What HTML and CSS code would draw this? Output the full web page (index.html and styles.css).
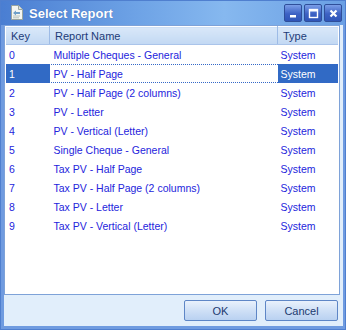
FILE: index.html
```html
<!DOCTYPE html>
<html>
<head>
    <title>Select Report</title>
    <link rel="stylesheet" href="styles.css">
</head>
<body>

    <div class="window">
        <div class="titlebar">
            <svg class="title-icon" width="13" height="15" viewBox="0 0 13 15">
                <path d="M1.5 0.5 H8.5 L12.5 4.5 V14.5 H1.5 Z" fill="#f4f6f2" stroke="#9aa6a0"/>
                <path d="M8.5 0.5 V4.5 H12.5" fill="#dfe4dc" stroke="#9aa6a0"/>
                <path d="M3 8 L6 5.5 L6 7 L10 7 L10 9 L6 9 L6 10.5 Z" fill="#6fa0c8"/>
                <path d="M3 11 H10 M3 12.8 H9" stroke="#b6c2bc"/>
            </svg>
            <span class="title-text">Select Report</span>
            <div class="title-buttons">
                <span class="tbtn"><svg width="15" height="15" viewBox="0 0 15 15"><rect x="4" y="9" width="6" height="2.5" fill="#fff"/></svg></span>
                <span class="tbtn"><svg width="15" height="15" viewBox="0 0 15 15"><rect x="3.5" y="3.5" width="8" height="8" fill="none" stroke="#fff" stroke-width="1.4"/><rect x="3" y="3" width="9" height="2.5" fill="#fff"/></svg></span>
                <span class="tbtn"><svg width="15" height="15" viewBox="0 0 15 15"><path d="M4.5 4.5 L10.5 10.5 M10.5 4.5 L4.5 10.5" stroke="#fff" stroke-width="2.2"/></svg></span>
            </div>
        </div>

        <div class="client">
            <div class="list">
                <table class="report-table">
                    <thead>
                        <tr>
                            <th class="col-key">Key</th>
                            <th class="col-name">Report Name</th>
                            <th class="col-type">Type</th>
                        </tr>
                    </thead>
                    <tbody>
                        <tr><td>0</td><td>Multiple Cheques - General</td><td>System</td></tr>
                        <tr class="selected"><td class="hl">1</td><td class="plain">PV - Half Page</td><td class="hl">System</td></tr>
                        <tr><td>2</td><td>PV - Half Page (2 columns)</td><td>System</td></tr>
                        <tr><td>3</td><td>PV - Letter</td><td>System</td></tr>
                        <tr><td>4</td><td>PV - Vertical (Letter)</td><td>System</td></tr>
                        <tr><td>5</td><td>Single Cheque - General</td><td>System</td></tr>
                        <tr><td>6</td><td>Tax PV - Half Page</td><td>System</td></tr>
                        <tr><td>7</td><td>Tax PV - Half Page (2 columns)</td><td>System</td></tr>
                        <tr><td>8</td><td>Tax PV - Letter</td><td>System</td></tr>
                        <tr><td>9</td><td>Tax PV - Vertical (Letter)</td><td>System</td></tr>
                    </tbody>
                </table>
            </div>

            <div class="button-row">
                <button class="btn">OK</button>
                <button class="btn">Cancel</button>
            </div>
        </div>
    </div>

</body>
</html>
```

FILE: styles.css
```css
body {
    margin: 0;
    padding: 0;
    background-color: #ffffff;
    font-family: Tahoma, "DejaVu Sans", sans-serif;
}

.window {
    width: 346px;
    height: 330px;
    box-sizing: border-box;
    background-color: #6f9be0;
    border: 1px solid #4f7fcf;
    display: flex;
    flex-direction: column;
}

.titlebar {
    height: 24px;
    display: flex;
    align-items: center;
    padding-left: 9px;
    background: linear-gradient(to right, #4a7ed2 0%, #6ea3e6 40%, #86b8ef 65%, #6a9fe4 100%);
}

.title-icon {
    margin-right: 6px;
    margin-top: -1px;
}

.title-text {
    font-family: "Liberation Sans", Arial, sans-serif;
    font-weight: bold;
    font-size: 13px;
    color: #ffffff;
    text-shadow: 0 0 1px #3a64b0;
}

.title-buttons {
    margin-left: auto;
    margin-right: 3px;
    display: flex;
    gap: 2px;
}

.tbtn {
    width: 16px;
    height: 16px;
    border-radius: 2px;
    border: 1px solid #2f4f9a;
    background: linear-gradient(#7b9ee8, #3d62c4 55%, #2f55b8);
    display: flex;
    align-items: center;
    justify-content: center;
}

.client {
    flex: 1;
    margin: 0 2px 3px 3px;
    background-color: #e1eefb;
    display: flex;
    flex-direction: column;
}

.list {
    height: 270px;
    width: 336px;
    box-sizing: border-box;
    border: 1px solid #7ea2d8;
    background-color: #ffffff;
    padding: 0 1px;
}

.report-table {
    width: 100%;
    border-collapse: collapse;
    font-family: "Liberation Sans", Arial, sans-serif;
    font-size: 10.5px;
}

.report-table th {
    height: 17px;
    padding: 0 0 0 5px;
    text-align: left;
    font-weight: normal;
    font-size: 11px;
    color: #1d3b78;
    background: linear-gradient(#d9e8f9, #c2d8f3);
    border-right: 1px solid #9dbbe6;
    border-bottom: 1px solid #aac4ea;
    border-top: 1px solid #ffffff;
}

.report-table th:last-child {
    border-right: none;
}

.col-key {
    width: 38px;
}

.col-name {
    width: 222px;
}

.report-table td {
    height: 19px;
    padding: 0 0 0 3px;
    color: #2424dc;
    white-space: nowrap;
}

.report-table td:nth-child(2) {
    padding-left: 4px;
}

.report-table tr.selected {
    outline: 1px dotted #3468c8;
    outline-offset: -1px;
}

.report-table td.hl {
    background-color: #316ac5;
    color: #ffffff;
}

.button-row {
    flex: 1;
    display: flex;
    justify-content: flex-end;
    align-items: center;
    gap: 8px;
    padding-right: 5px;
}

.btn {
    width: 73px;
    height: 21px;
    font-family: "Liberation Sans", Arial, sans-serif;
    font-size: 11px;
    color: #1c3a70;
    background: linear-gradient(#e9f1fc, #cfe0f6 50%, #b9d1f1);
    border: 1px solid #5e86c6;
    border-radius: 2px;
    padding: 0;
}
```
